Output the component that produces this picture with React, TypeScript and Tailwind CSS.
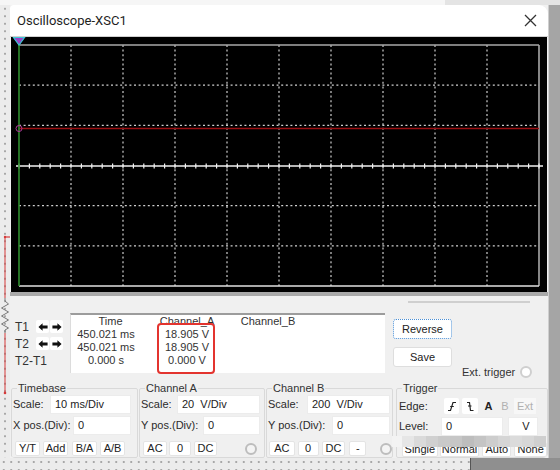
import React from "react";

const ui = "font-['Liberation_Sans',Arial,sans-serif]";

function Scope() {
  const xs = Array.from({ length: 11 }, (_, i) => 8 + i * 52);
  const ys = Array.from({ length: 7 }, (_, j) => 8 + j * 40.17);
  const ticks = Array.from({ length: 51 }, (_, k) => 8 + k * 10.4);
  return (
    <svg width="536" height="255" viewBox="0 0 536 255" className="block">
      <rect width="536" height="255" fill="#000" />
      {xs.slice(1, 10).map((x) => (
        <line key={"v" + x} x1={x} y1={8} x2={x} y2={249} stroke="#cfcfcf" strokeWidth="1.2" strokeDasharray="2 2.6" />
      ))}
      {[1, 2, 4, 5].map((j) => (
        <line key={"h" + j} x1={8} y1={ys[j]} x2={528} y2={ys[j]} stroke="#cfcfcf" strokeWidth="1.2" strokeDasharray="2 2.6" />
      ))}
      <line x1={8} y1={8} x2={528} y2={8} stroke="#a9a9a9" strokeWidth="1.6" />
      <line x1={528} y1={8} x2={528} y2={249} stroke="#a9a9a9" strokeWidth="1.6" />
      <line x1={8} y1={249} x2={528} y2={249} stroke="#e2e2e2" strokeWidth="1.6" />
      <line x1={5} y1={129} x2={532} y2={129} stroke="#f2f2f2" strokeWidth="1.6" />
      {ticks.map((t) => (
        <line key={"t" + t} x1={t} y1={126.5} x2={t} y2={131.5} stroke="#f2f2f2" strokeWidth="1.2" />
      ))}
      <line x1={8} y1={91.5} x2={528} y2={91.5} stroke="#9b0f12" strokeWidth="1.6" />
      <line x1={8} y1={0} x2={8} y2={249} stroke="#2f8f2f" strokeWidth="1.6" />
      <circle cx={8} cy={91.5} r={3} fill="none" stroke="#b03a9a" strokeWidth="1" />
      <polygon points="2.5,0.5 13.5,0.5 8,8" fill="#9a45c8" stroke="#3ec6d8" strokeWidth="1.2" />
    </svg>
  );
}

function Arrow({ dir }: { dir: "l" | "r" }) {
  return (
    <div className="w-[13px] h-[13px] bg-white rounded-[2px] flex items-center justify-center">
      <svg width="10" height="10" viewBox="0 0 12 12">
        <path
          d={dir === "l" ? "M0.5 6 L5.5 1.5 L5.5 4.3 L11.5 4.3 L11.5 7.7 L5.5 7.7 L5.5 10.5 Z" : "M11.5 6 L6.5 1.5 L6.5 4.3 L0.5 4.3 L0.5 7.7 L6.5 7.7 L6.5 10.5 Z"}
          fill="#111"
        />
      </svg>
    </div>
  );
}

function Btn({ w, children, dim }: { w: string; children: React.ReactNode; dim?: boolean }) {
  return (
    <div
      className={`${w} h-[15px] bg-white border border-[#e4e4e4] rounded-[2px] flex items-center justify-center text-[11px] leading-none ${dim ? "text-[#a8a8a8]" : "text-[#222]"}`}
    >
      {children}
    </div>
  );
}

function Field({ w, children }: { w: string; children: React.ReactNode }) {
  return (
    <div className={`${w} h-[19px] bg-white border border-[#ececec] flex items-center pl-[4px] text-[11px] text-[#222] whitespace-pre`}>
      {children}
    </div>
  );
}

function Radio({ light }: { light?: boolean }) {
  return (
    <div
      className={`w-[12px] h-[12px] rounded-full border-2 ${light ? "border-[#cfcfcf] bg-white" : "border-[#bdbdbd] bg-[#f4f4f4]"}`}
    />
  );
}

function Group({ w, title, children }: { w: string; title: string; children: React.ReactNode }) {
  return (
    <fieldset className={`${w} border border-[#d9d9d9] rounded-[2px] min-w-0`}>
      <legend className="ml-[5px] px-[1px] text-[11px] leading-[13px] text-[#333]">{title}</legend>
      {children}
    </fieldset>
  );
}

const mosaic = ["#f3f3f3", "#e6e6e6", "#dadada", "#d0d0d0", "#c9c9c9", "#c6c6c6", "#bdbdbd", "#c4c4c4", "#cdcdcd", "#d5d5d5", "#dbdbdb", "#d7d7d7", "#cfcfcf"];

export default function App() {
  return (
    <div className={`w-[560px] h-[470px] overflow-hidden flex flex-col bg-[#f1f1f1] ${ui}`}>
      <div className="h-[5px] flex">
        <div className="w-[445px] bg-[#f6f6f6]" />
        <div className="flex-1 bg-[#e4e4e4]" />
      </div>
      <div className="flex h-[453px]">
        {/* schematic strip on the left */}
        <div className="w-[10px] h-full bg-[#ececec] bg-[radial-gradient(circle,#a8a8a8_0.9px,transparent_1.2px)] bg-size-[10px_7.5px]">
          <svg width="10" height="453" viewBox="0 0 10 453" className="block">
            <line x1="5" y1="232" x2="5" y2="293" stroke="#d63a3a" strokeWidth="1" />
            <line x1="5" y1="232" x2="10" y2="232" stroke="#d63a3a" strokeWidth="1.2" />
            <circle cx="5" cy="232" r="1.2" fill="#d63a3a" />
            <polyline points="5,293 5,296 8.5,299 1.5,303 8.5,307 1.5,311 8.5,315 1.5,319 8.5,323 5,325 5,328" fill="none" stroke="#777" strokeWidth="1" />
            <line x1="5" y1="328" x2="5" y2="388" stroke="#d63a3a" strokeWidth="1" />
            <circle cx="5" cy="388" r="1.3" fill="#d63a3a" />
          </svg>
        </div>

        {/* window */}
        <div className="relative w-[538px] h-full flex flex-col bg-[#f0f0f0] rounded-tr-[9px] rounded-tl-[4px] rounded-b-[5px] overflow-hidden">
          <div className="h-[31px] bg-white flex items-center justify-between pl-[7px] pr-[11px]">
            <span className="font-['Roboto',Arial,sans-serif] text-[13px] text-[#1e1e1e]">Oscilloscope-XSC1</span>
            <svg width="13" height="13" viewBox="0 0 13 13">
              <path d="M1 1 L12 12 M12 1 L1 12" stroke="#333" strokeWidth="1.3" />
            </svg>
          </div>
          <div className="h-px bg-[#d0d0d0]" />
          <div className="pl-px">
            <Scope />
          </div>
          <div className="h-[4px] bg-[#a9a9a9]" />

          {/* readout row */}
          <div className="h-[86px] flex">
            <div className="w-[60px] pl-[5px] pt-[24px] text-[12px] text-[#333]">
              <div className="flex items-center h-[13px]">
                <span className="w-[21px]">T1</span>
                <Arrow dir="l" />
                <div className="w-px" />
                <Arrow dir="r" />
              </div>
              <div className="flex items-center h-[13px] mt-[4px]">
                <span className="w-[21px]">T2</span>
                <Arrow dir="l" />
                <div className="w-px" />
                <Arrow dir="r" />
              </div>
              <div className="mt-[5px] leading-[13px]">T2-T1</div>
            </div>
            <div className="relative mt-[17px] w-[315px] h-[60px] bg-white border-t-2 border-t-[#9c9c9c] border-l border-l-[#dcdcdc] flex pl-[2px] text-[11px] leading-[13px] text-[#333]">
              <div className="w-[66px] text-center">
                <div className="pl-[9px]">Time</div>
                <div>450.021 ms</div>
                <div>450.021 ms</div>
                <div>0.000 s</div>
              </div>
              <div className="w-[72px] ml-[12px] text-center">
                <div>Channel_A</div>
                <div>18.905 V</div>
                <div>18.905 V</div>
                <div>0.000 V</div>
              </div>
              <div className="w-[70px] ml-[10px] text-center">
                <div>Channel_B</div>
              </div>
              <div className="absolute left-[86px] top-[8px] w-[58px] h-[51px] border-2 border-[#e3342f] rounded-[4px]" />
            </div>
            <div className="flex-1 pl-[8px] flex flex-col">
              <div className="h-[2px] bg-[#cfcfcf] ml-[15px] w-[122px] mt-[5px]" />
              <div className="mt-[16px] w-[59px] h-[20px] bg-white border border-dotted border-[#4a8fd6] rounded-[3px] flex items-center justify-center text-[11px] text-[#222]">
                Reverse
              </div>
              <div className="mt-[8px] w-[59px] h-[20px] bg-white border border-[#dedede] rounded-[3px] flex items-center justify-center text-[11px] text-[#222]">
                Save
              </div>
              <div className="flex items-center mt-[-3px] ml-[69px] gap-[5px] text-[11px] text-[#333]">
                <span>Ext. trigger</span>
                <Radio light />
              </div>
            </div>
          </div>

          {/* control groups */}
          <div className="flex pl-px text-[11px] text-[#2b2b2b]">
            <Group w="w-[127px]" title="Timebase">
              <div className="flex items-center pl-px">
                <span className="w-[37px]">Scale:</span>
                <Field w="w-[81px]">10 ms/Div</Field>
              </div>
              <div className="flex items-center pl-px mt-[2px]">
                <span className="w-[60px]">X pos.(Div):</span>
                <Field w="w-[58px]">0</Field>
              </div>
              <div className="flex items-center pl-[3px] mt-[6px] mb-px">
                <Btn w="w-[25px]">Y/T</Btn>
                <div className="w-[3px]" />
                <Btn w="w-[25px]">Add</Btn>
                <div className="w-[4px]" />
                <Btn w="w-[25px]">B/A</Btn>
                <div className="w-[3px]" />
                <Btn w="w-[25px]">A/B</Btn>
              </div>
            </Group>
            <div className="w-px" />
            <Group w="w-[126px]" title="Channel A">
              <div className="flex items-center pl-px">
                <span className="w-[36px]">Scale:</span>
                <Field w="w-[83px]">20  V/Div</Field>
              </div>
              <div className="flex items-center pl-px mt-[2px]">
                <span className="w-[62px]">Y pos.(Div):</span>
                <Field w="w-[57px]">0</Field>
              </div>
              <div className="flex items-center pl-[3px] mt-[6px]">
                <Btn w="w-[24px]">AC</Btn>
                <div className="w-[2px]" />
                <Btn w="w-[22px]">0</Btn>
                <div className="w-[3px]" />
                <Btn w="w-[23px]">DC</Btn>
                <div className="w-[28px]" />
                <Radio />
              </div>
            </Group>
            <div className="w-px" />
            <Group w="w-[127px]" title="Channel B">
              <div className="flex items-center pl-px">
                <span className="w-[39px]">Scale:</span>
                <Field w="w-[83px]">200  V/Div</Field>
              </div>
              <div className="flex items-center pl-px mt-[2px]">
                <span className="w-[64px]">Y pos.(Div):</span>
                <Field w="w-[58px]">0</Field>
              </div>
              <div className="flex items-center pl-[2px] mt-[6px]">
                <Btn w="w-[26px]">AC</Btn>
                <div className="w-[3px]" />
                <Btn w="w-[21px]">0</Btn>
                <div className="w-[3px]" />
                <Btn w="w-[24px]">DC</Btn>
                <div className="w-[4px]" />
                <Btn w="w-[17px]">-</Btn>
                <div className="w-[14px]" />
                <Radio />
              </div>
            </Group>
            <div className="w-[3px]" />
            <Group w="w-[152px]" title="Trigger">
              <div className="flex items-center pl-[2px] mt-[3px] h-[16px]">
                <span className="w-[45px]">Edge:</span>
                <div className="w-[15px] h-[16px] bg-white rounded-[2px] flex items-center justify-center">
                  <svg width="10" height="11" viewBox="0 0 10 11">
                    <path d="M1 9.5 H3.5 L6 1.5 H9" fill="none" stroke="#222" strokeWidth="1.2" />
                    <path d="M3.2 5.5 H6.8" stroke="#222" strokeWidth="1" />
                  </svg>
                </div>
                <div className="w-[3px]" />
                <div className="w-[16px] h-[16px] bg-white rounded-[2px] flex items-center justify-center">
                  <svg width="10" height="11" viewBox="0 0 10 11">
                    <path d="M2 1.5 H4.5 L5.5 9.5 H8.5" fill="none" stroke="#222" strokeWidth="1.2" />
                    <path d="M3 5 H6.5" stroke="#222" strokeWidth="1" />
                  </svg>
                </div>
                <div className="w-[3px]" />
                <div className="w-[15px] text-center font-bold text-[#222]">A</div>
                <div className="w-[2px]" />
                <div className="w-[14px] text-center text-[#b0b0b0]">B</div>
                <div className="w-[2px]" />
                <div className="w-[22px] h-[16px] bg-[#f7f7f7] flex items-center justify-center text-[#b0b0b0]">Ext</div>
              </div>
              <div className="flex items-center pl-[2px] mt-[3px]">
                <span className="w-[42px]">Level:</span>
                <Field w="w-[62px]">0</Field>
                <div className="w-[5px]" />
                <Field w="w-[30px]">{"   V"}</Field>
              </div>
              <div className="flex items-center pl-[5px] mt-[6px]">
                <Btn w="w-[36px]">Single</Btn>
                <div className="w-[2px]" />
                <Btn w="w-[40px]">Normal</Btn>
                <div className="w-[3px]" />
                <Btn w="w-[29px]">Auto</Btn>
                <div className="w-[3px]" />
                <Btn w="w-[33px]">None</Btn>
              </div>
            </Group>
          </div>

          {/* pixelated watermark over the bottom right */}
          <div className="absolute left-[382px] top-[431px] h-[11px] flex">
            {mosaic.map((c, i) => (
              <div key={i} className={`h-full ${i === 0 ? "w-[10px]" : "w-[12px]"}`}>
                <div className={`h-full w-full ${["bg-[#f3f3f3]", "bg-[#e6e6e6]", "bg-[#dadada]", "bg-[#d0d0d0]", "bg-[#c9c9c9]", "bg-[#c6c6c6]", "bg-[#bdbdbd]", "bg-[#c4c4c4]", "bg-[#cdcdcd]", "bg-[#d5d5d5]", "bg-[#dbdbdb]", "bg-[#d7d7d7]", "bg-[#cfcfcf]"][i]}`} data-c={c} />
              </div>
            ))}
          </div>
        </div>

        <div className="w-[12px] h-full bg-[#a5a5a5] border-l border-[#cfcfcf]" />
      </div>
      <div className="flex flex-1">
        <div className="w-[470px] bg-[#ececec] bg-[radial-gradient(circle,#a8a8a8_0.9px,transparent_1.2px)] bg-size-[7.5px_8px]" />
        <div className="w-px bg-[#555]" />
        <div className="flex-1 bg-[#8f8f8f]" />
      </div>
    </div>
  );
}
